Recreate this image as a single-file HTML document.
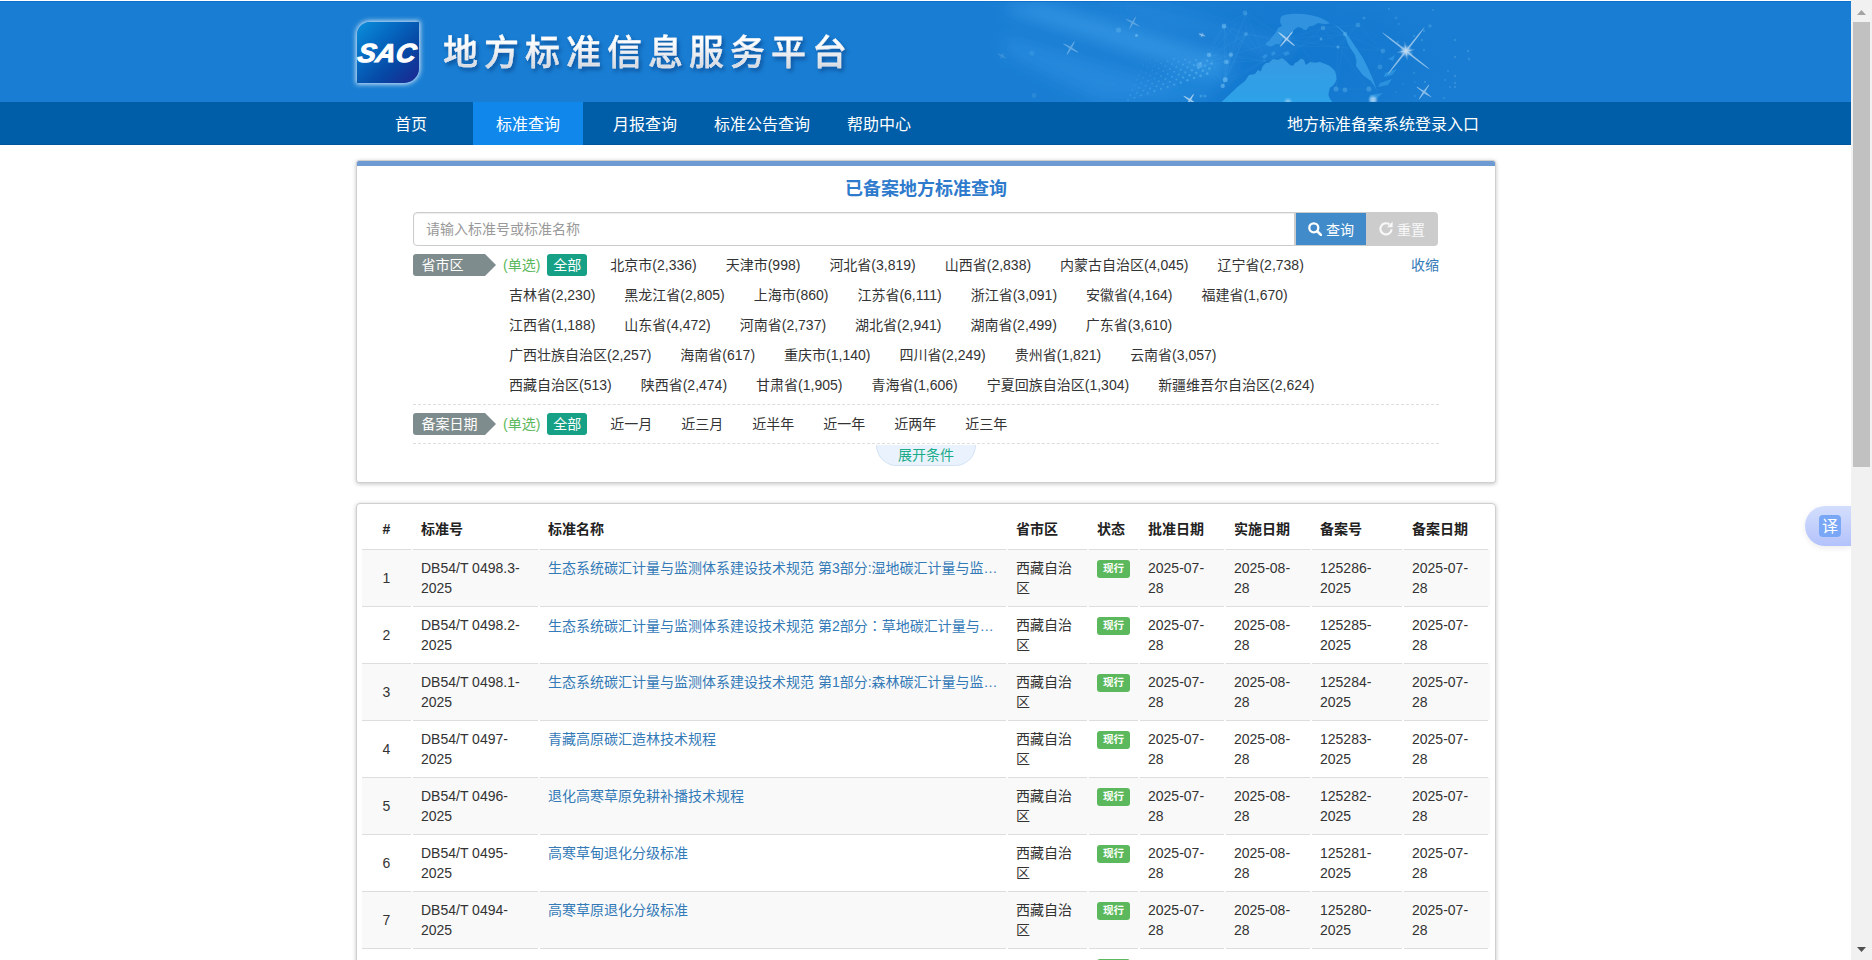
<!DOCTYPE html>
<html lang="zh-CN">
<head>
<meta charset="utf-8">
<title>地方标准信息服务平台</title>
<style>
*{box-sizing:border-box}
html,body{margin:0;padding:0}
body{width:1872px;height:960px;overflow:hidden;position:relative;background:#fff;
 font-family:"Liberation Sans","Noto Sans CJK SC",sans-serif;font-size:14px;line-height:20px;color:#333}
a{color:#337ab7;text-decoration:none}
#page{position:absolute;left:0;top:0;width:1851px;height:960px;overflow:hidden}
/* header */
#top{position:absolute;left:0;top:1px;width:1851px;height:101px;background:#197ed3;overflow:hidden;border-top:1px solid #0f70cb}
#deco{position:absolute;left:940px;top:-1px}
#logo{position:absolute;left:357px;top:20px;width:62px;height:61px;border-radius:13px 0 15px 0;
 background:linear-gradient(135deg,#0b8fdb 0%,#0568c0 35%,#0648a4 65%,#1d2590 100%);box-shadow:0 0 5px 1px rgba(255,255,255,.85)}
#logo svg{position:absolute;left:0;top:0;overflow:visible}
#title{position:absolute;left:443px;top:29px;font-size:35px;line-height:44px;font-weight:500;letter-spacing:6px;-webkit-text-stroke:0.3px #eef0f4;filter:drop-shadow(2px 3px 2px rgba(0,30,90,.45));white-space:nowrap;
 color:#f1f3f6;text-shadow:1px 2px 3px rgba(0,40,100,.55)}
#title span{background:linear-gradient(#fff 20%,#d6dbe2 85%);-webkit-background-clip:text;background-clip:text;color:transparent;text-shadow:none}
/* nav */
#nav{position:absolute;left:0;top:102px;width:1851px;height:43px;background:#005ea8;border-bottom:1px solid #00569e}
#nav a{position:absolute;top:0;height:43px;line-height:45px;width:110px;text-align:center;color:#fff;font-size:16px}
#nav a.on{background:#1088eb}
#nav a.r{width:auto;left:1287px}
/* panels */
.panel{position:absolute;left:356px;width:1140px;background:#fff;border:1px solid #cfcfcf;border-radius:4px;box-shadow:0 1px 4px rgba(0,0,0,.24)}
#search{top:160px;height:323px;border-radius:3px}
#search .strip{position:absolute;left:0;top:0;width:1138px;height:5px;background:#6e9ad3;border-radius:2px 2px 0 0}
#search h3{position:absolute;left:0;top:16px;width:1138px;margin:0;text-align:center;font-size:18px;line-height:24px;font-weight:bold;color:#2e7acc}
#q{position:absolute;left:56px;top:51px;width:882px;height:34px;border:1px solid #ccc;border-radius:4px 0 0 4px;padding:6px 12px;color:#999;font-size:14px;line-height:20px;box-shadow:inset 0 1px 1px rgba(0,0,0,.075)}
.btn{position:absolute;top:51px;height:34px;line-height:34px;font-size:14px;color:#fff;text-align:center;white-space:nowrap}
#bq{left:938px;width:72px;background:#428bca;border:1px solid #ccc;line-height:34px}
#br{left:1009px;width:72px;background:#ccc;color:#f8f8f8;line-height:36px;border-radius:0 4px 4px 0}
.btn svg{vertical-align:-1px;margin-right:4px}
.sec{position:absolute;left:56px;width:1026px;border-bottom:1px dashed #ddd}
.tag{position:absolute;left:0;top:8px;height:22px;width:72px;background:#7f8c8d;color:#fff;border-radius:3px 0 0 3px;padding-left:8.5px;line-height:22px}
.tag:after{content:"";position:absolute;left:72px;top:0;border:11px solid transparent;border-left-color:#7f8c8d;border-right-width:0}
.rows{position:absolute;left:90px;top:8px}
.row{height:30px;white-space:nowrap;line-height:22px}
.row span{display:inline-block;height:22px;padding:0 6px;margin-right:17px;vertical-align:top}
.row span.s{padding:0;margin-right:7px;color:#5cb85c}
.row span.all{background:#16a085;color:#fff;border-radius:3px}
.fold{position:absolute;right:0;top:8px;line-height:22px;color:#337ab7}
#more{position:absolute;left:519px;top:284px;width:100px;height:20.5px;background:#eaf3fd;border:1px solid #d3e2f5;border-top:0;border-radius:0 0 21px 21px;text-align:center;line-height:20px;color:#1aab8a}
/* table */
#list{top:503px;height:600px}
table{position:absolute;left:3px;top:7px;width:1130px;border-collapse:separate;border-spacing:2px 0;table-layout:fixed;background:repeating-linear-gradient(to bottom,#f9f9f9 0,#f9f9f9 57px,transparent 57px,transparent 114px) no-repeat 2px 38px/1128px 100%}
th,td{padding:8px;text-align:left;vertical-align:top;line-height:20px;font-size:14px}
th{font-weight:bold;height:38px;color:#222}
td{border-top:1px solid #ddd;height:57px}

td.c,th.c{text-align:center}
td.c{vertical-align:middle}
td.n{white-space:nowrap;overflow:hidden;text-overflow:ellipsis}
.lab{display:inline-block;white-space:nowrap;background:#5cb85c;color:#fff;font-weight:bold;font-size:10.5px;line-height:11px;padding:3px 6px 4px;border-radius:3px;vertical-align:top;margin-top:2px}
/* scrollbar */
#sb{position:absolute;left:1851px;top:0;width:21px;height:960px;background:#f1f1f1}
#sb i{position:absolute;left:2px;top:22px;width:17px;height:445px;background:#c1c1c1}
#sb b{position:absolute;left:6px;width:9px;height:5px}
#sb b.u{top:10px;background:#a3a3a3;clip-path:polygon(50% 0,100% 100%,0 100%)}
#sb b.d{top:947px;background:#505050;clip-path:polygon(0 0,100% 0,50% 100%)}
/* translate */
#tr{position:absolute;left:1805px;top:506px;width:46px;height:40px;border-radius:20px 0 0 20px;background:linear-gradient(#d3defd,#b3c2fb);box-shadow:0 2px 6px rgba(0,0,0,.08)}
#tr span{position:absolute;left:14px;top:9px;width:22px;height:22px;border-radius:4px;background:#7aa7f5;color:#fff;font-size:16px;line-height:24px;text-align:center}
</style>
</head>
<body>
<div id="page">
<div id="top">
<svg id="deco" width="620" height="101" viewBox="940 0 620 101">
<defs><filter id="b1" x="-100%" y="-100%" width="300%" height="300%"><feGaussianBlur stdDeviation="1.3"/></filter>
<filter id="b8" x="-50%" y="-50%" width="200%" height="200%"><feGaussianBlur stdDeviation="8"/></filter>
<filter id="b05"><feGaussianBlur stdDeviation=".45"/></filter>
<radialGradient id="gl" cx="50%" cy="50%" r="50%"><stop offset="0" stop-color="#0d72cb" stop-opacity=".6"/><stop offset=".65" stop-color="#1075cd" stop-opacity=".4"/><stop offset="1" stop-color="#197ed3" stop-opacity="0"/></radialGradient>
<linearGradient id="lg" x1="0" y1="0" x2="0" y2="1"><stop offset="0" stop-color="#3a9de4"/><stop offset="1" stop-color="#2fa5ea"/></linearGradient>
<linearGradient id="fade" x1="0" y1="0" x2="1" y2="0"><stop offset="0" stop-color="#197ed3"/><stop offset="1" stop-color="#197ed3" stop-opacity="0"/></linearGradient></defs>
<ellipse cx="1300" cy="62" rx="170" ry="88" fill="url(#gl)"/>
<g filter="url(#b8)"><path d="M995 6L1040 2L1235 56L1212 78z" fill="#46a2ec" opacity=".55"/><path d="M990 44L1010 36L1180 84L1140 101L1100 101z" fill="#3a99e8" opacity=".4"/><path d="M1090 0L1130 0L1300 44L1280 58z" fill="#3a99e8" opacity=".3"/><path d="M1170 70L1215 55L1240 70L1200 101L1150 101z" fill="#2f95e6" opacity=".35"/></g>
<rect x="985" y="0" width="30" height="101" fill="url(#fade)"/>
<path d="M1224 25L1246 12" stroke="#9ad6fb" stroke-width=".5" opacity=".09"/><path d="M1224 25L1246 33" stroke="#9ad6fb" stroke-width=".5" opacity=".09"/><path d="M1224 25L1209 54" stroke="#9ad6fb" stroke-width=".5" opacity=".09"/><path d="M1224 25L1231 54" stroke="#9ad6fb" stroke-width=".5" opacity=".09"/><path d="M1224 25L1199 64" stroke="#9ad6fb" stroke-width=".5" opacity=".09"/><path d="M1224 25L1227 61" stroke="#9ad6fb" stroke-width=".5" opacity=".09"/><path d="M1224 25L1225 79" stroke="#9ad6fb" stroke-width=".5" opacity=".09"/><path d="M1224 25L1265 60" stroke="#9ad6fb" stroke-width=".5" opacity=".09"/><path d="M1246 12L1246 33" stroke="#9ad6fb" stroke-width=".5" opacity=".09"/><path d="M1246 12L1209 54" stroke="#9ad6fb" stroke-width=".5" opacity=".09"/><path d="M1246 12L1231 54" stroke="#9ad6fb" stroke-width=".5" opacity=".09"/><path d="M1246 12L1227 61" stroke="#9ad6fb" stroke-width=".5" opacity=".09"/><path d="M1246 12L1286 38" stroke="#9ad6fb" stroke-width=".5" opacity=".09"/><path d="M1246 12L1265 60" stroke="#9ad6fb" stroke-width=".5" opacity=".09"/><path d="M1246 33L1209 54" stroke="#9ad6fb" stroke-width=".5" opacity=".09"/><path d="M1246 33L1231 54" stroke="#9ad6fb" stroke-width=".5" opacity=".09"/><path d="M1246 33L1199 64" stroke="#9ad6fb" stroke-width=".5" opacity=".09"/><path d="M1246 33L1227 61" stroke="#9ad6fb" stroke-width=".5" opacity=".09"/><path d="M1246 33L1225 79" stroke="#9ad6fb" stroke-width=".5" opacity=".09"/><path d="M1246 33L1223 85" stroke="#9ad6fb" stroke-width=".5" opacity=".09"/><path d="M1246 33L1286 38" stroke="#9ad6fb" stroke-width=".5" opacity=".09"/><path d="M1246 33L1265 60" stroke="#9ad6fb" stroke-width=".5" opacity=".09"/><path d="M1246 33L1300 45" stroke="#9ad6fb" stroke-width=".5" opacity=".09"/><path d="M1209 54L1231 54" stroke="#9ad6fb" stroke-width=".5" opacity=".09"/><path d="M1209 54L1199 64" stroke="#9ad6fb" stroke-width=".5" opacity=".09"/><path d="M1209 54L1227 61" stroke="#9ad6fb" stroke-width=".5" opacity=".09"/><path d="M1209 54L1225 79" stroke="#9ad6fb" stroke-width=".5" opacity=".09"/><path d="M1209 54L1223 85" stroke="#9ad6fb" stroke-width=".5" opacity=".09"/><path d="M1209 54L1265 60" stroke="#9ad6fb" stroke-width=".5" opacity=".09"/><path d="M1231 54L1199 64" stroke="#9ad6fb" stroke-width=".5" opacity=".09"/><path d="M1231 54L1227 61" stroke="#9ad6fb" stroke-width=".5" opacity=".09"/><path d="M1231 54L1225 79" stroke="#9ad6fb" stroke-width=".5" opacity=".09"/><path d="M1231 54L1223 85" stroke="#9ad6fb" stroke-width=".5" opacity=".09"/><path d="M1231 54L1286 38" stroke="#9ad6fb" stroke-width=".5" opacity=".09"/><path d="M1231 54L1265 60" stroke="#9ad6fb" stroke-width=".5" opacity=".09"/><path d="M1199 64L1227 61" stroke="#9ad6fb" stroke-width=".5" opacity=".09"/><path d="M1199 64L1225 79" stroke="#9ad6fb" stroke-width=".5" opacity=".09"/><path d="M1199 64L1223 85" stroke="#9ad6fb" stroke-width=".5" opacity=".09"/><path d="M1227 61L1225 79" stroke="#9ad6fb" stroke-width=".5" opacity=".09"/><path d="M1227 61L1223 85" stroke="#9ad6fb" stroke-width=".5" opacity=".09"/><path d="M1227 61L1265 60" stroke="#9ad6fb" stroke-width=".5" opacity=".09"/><path d="M1225 79L1223 85" stroke="#9ad6fb" stroke-width=".5" opacity=".09"/><path d="M1225 79L1265 60" stroke="#9ad6fb" stroke-width=".5" opacity=".09"/><path d="M1223 85L1265 60" stroke="#9ad6fb" stroke-width=".5" opacity=".09"/><path d="M1286 38L1323 27" stroke="#9ad6fb" stroke-width=".5" opacity=".09"/><path d="M1286 38L1345 33" stroke="#9ad6fb" stroke-width=".5" opacity=".09"/><path d="M1286 38L1338 46" stroke="#9ad6fb" stroke-width=".5" opacity=".09"/><path d="M1286 38L1265 60" stroke="#9ad6fb" stroke-width=".5" opacity=".09"/><path d="M1286 38L1300 45" stroke="#9ad6fb" stroke-width=".5" opacity=".09"/><path d="M1323 27L1345 33" stroke="#9ad6fb" stroke-width=".5" opacity=".09"/><path d="M1323 27L1338 46" stroke="#9ad6fb" stroke-width=".5" opacity=".09"/><path d="M1323 27L1358 24" stroke="#9ad6fb" stroke-width=".5" opacity=".09"/><path d="M1323 27L1300 45" stroke="#9ad6fb" stroke-width=".5" opacity=".09"/><path d="M1345 33L1338 46" stroke="#9ad6fb" stroke-width=".5" opacity=".09"/><path d="M1345 33L1358 24" stroke="#9ad6fb" stroke-width=".5" opacity=".09"/><path d="M1345 33L1383 50" stroke="#9ad6fb" stroke-width=".5" opacity=".09"/><path d="M1345 33L1336 88" stroke="#9ad6fb" stroke-width=".5" opacity=".09"/><path d="M1345 33L1300 45" stroke="#9ad6fb" stroke-width=".5" opacity=".09"/><path d="M1338 46L1358 24" stroke="#9ad6fb" stroke-width=".5" opacity=".09"/><path d="M1338 46L1383 50" stroke="#9ad6fb" stroke-width=".5" opacity=".09"/><path d="M1338 46L1336 88" stroke="#9ad6fb" stroke-width=".5" opacity=".09"/><path d="M1338 46L1369 88" stroke="#9ad6fb" stroke-width=".5" opacity=".09"/><path d="M1338 46L1300 45" stroke="#9ad6fb" stroke-width=".5" opacity=".09"/><path d="M1358 24L1383 50" stroke="#9ad6fb" stroke-width=".5" opacity=".09"/><path d="M1383 50L1369 88" stroke="#9ad6fb" stroke-width=".5" opacity=".09"/><path d="M1336 88L1369 88" stroke="#9ad6fb" stroke-width=".5" opacity=".09"/><path d="M1336 88L1300 45" stroke="#9ad6fb" stroke-width=".5" opacity=".09"/><path d="M1265 60L1300 45" stroke="#9ad6fb" stroke-width=".5" opacity=".09"/>
<g filter="url(#b05)"><path d="M1220.6 102L1229 94L1238 85.6L1245 80L1249 74L1255 73L1258 69L1260.7 70.4L1262.8 65L1266 62L1269 61.8L1273 58L1278 59L1282 57L1286.7 60.7L1290 64L1293 65L1295 62L1297.5 60.7L1301 57.5L1304 59L1305 62L1306 64L1310 61L1314.8 61.8L1320 61L1324.6 62.8L1329 64.5L1332 67L1335 70L1336 73.7L1336.5 78L1335.4 81.3L1333 84.5L1330 86.7L1329 90L1328.4 94.3L1330 98L1333 102z" fill="url(#lg)" opacity=".93"/><path d="M1265.5 43.3L1267 41L1269 40L1272 36L1275.8 31.4L1278 27L1282 25L1280 21L1280.7 16.3L1283 14.5L1286.7 13.5L1294 12.8L1303 13L1311 14.2L1319 16.3L1325 19L1330 22.2L1326 23L1322.4 22.8L1318 22L1313.8 24.4L1309 25.5L1306 29.3L1303.5 28.5L1301.8 27L1298 26L1295 28L1293 30L1292 33.6L1289 33L1286.7 34.7L1283 38L1280 43.3L1276 43L1271.5 45.5L1268 45z" fill="#3698e2" opacity=".85"/><path d="M1334 23.3L1339 26.5L1344 30.3L1349 36L1353.8 43.3L1358 49.5L1362.5 56.3L1366.5 64L1370 71.5L1373 78.5L1375.5 85.6L1377.5 92L1378.8 97.5L1379.5 102L1377.7 92L1375 86L1371 80L1366 76.5L1362.5 73.7L1359 69L1356 65L1356.5 60L1355 54L1351 48L1348 43L1346 37.5L1344 32.5L1339 27.5z" fill="#379de6" opacity=".85"/>
<path d="M1262 56L1265 53L1268 54L1265 58z M1271 52L1274 50L1276 53L1272 55z M1283 52L1288 50L1290 53L1285 55z" fill="#3698e2" opacity=".7"/>
<path d="M1385 72L1397 68L1392 74L1384 76z M1380 82L1392 78L1388 84L1378 86z M1370 94L1383 92L1376 98L1369 98z M1388 58L1395 54L1393 60z" fill="#3ba4ea" opacity=".55"/></g>
<circle cx="1118.5" cy="29" r="2.6" fill="#7fcaf8" opacity="0.28"/><circle cx="1136.5" cy="34.4" r="1.6" fill="#7fcaf8" opacity="0.5"/><circle cx="1031.8" cy="52" r="2.6" fill="#7fcaf8" opacity="0.16"/><circle cx="1034" cy="94.5" r="2.4" fill="#7fcaf8" opacity="0.15"/><circle cx="1224" cy="25.4" r="2.4" fill="#7fcaf8" opacity="0.3"/><circle cx="1209" cy="53.8" r="2.4" fill="#7fcaf8" opacity="0.32"/><circle cx="1230.7" cy="53.5" r="2.2" fill="#7fcaf8" opacity="0.3"/><circle cx="1199.3" cy="64.3" r="3" fill="#7fcaf8" opacity="0.32"/><circle cx="1226" cy="61" r="2.4" fill="#7fcaf8" opacity="0.3"/><circle cx="1225.5" cy="78.5" r="2.6" fill="#7fcaf8" opacity="0.32"/><circle cx="1222.5" cy="85" r="2.2" fill="#7fcaf8" opacity="0.3"/><circle cx="1245" cy="12" r="2.4" fill="#7fcaf8" opacity="0.25"/><circle cx="1224" cy="25" r="2.4" fill="#7fcaf8" opacity="0.28"/><circle cx="1246" cy="33" r="2" fill="#7fcaf8" opacity="0.28"/><circle cx="1209" cy="54" r="2" fill="#7fcaf8" opacity="0.3"/><circle cx="1231" cy="54" r="2" fill="#7fcaf8" opacity="0.3"/><circle cx="1227" cy="61" r="2" fill="#7fcaf8" opacity="0.3"/><circle cx="1225" cy="79" r="2.4" fill="#7fcaf8" opacity="0.3"/><circle cx="1223" cy="85" r="2" fill="#7fcaf8" opacity="0.28"/><circle cx="1201" cy="95" r="1.6" fill="#7fcaf8" opacity="0.3"/><circle cx="1205" cy="95" r="1.6" fill="#7fcaf8" opacity="0.3"/><circle cx="1323" cy="27" r="2.2" fill="#7fcaf8" opacity="0.3"/><circle cx="1345" cy="33" r="2.2" fill="#7fcaf8" opacity="0.3"/><circle cx="1321" cy="38" r="1.4" fill="#7fcaf8" opacity="0.4"/><circle cx="1338" cy="46" r="1.6" fill="#7fcaf8" opacity="0.4"/><circle cx="1358" cy="24" r="2.4" fill="#7fcaf8" opacity="0.25"/><circle cx="1383" cy="50" r="2.4" fill="#7fcaf8" opacity="0.25"/><circle cx="1380" cy="66" r="2.4" fill="#7fcaf8" opacity="0.25"/><circle cx="1336" cy="88" r="2.6" fill="#7fcaf8" opacity="0.3"/><circle cx="1345" cy="89" r="2.4" fill="#7fcaf8" opacity="0.3"/><circle cx="1369" cy="88" r="2.6" fill="#7fcaf8" opacity="0.3"/><circle cx="1364" cy="17" r="1.6" fill="#7fcaf8" opacity="0.25"/><circle cx="1396" cy="17" r="1.4" fill="#7fcaf8" opacity="0.2"/><circle cx="1389" cy="8" r="1.2" fill="#7fcaf8" opacity="0.2"/><circle cx="1430" cy="25" r="1.8" fill="#7fcaf8" opacity="0.25"/><circle cx="1128.0" cy="99.0" r="0.92" fill="#6cc4f7" opacity="0.27"/><circle cx="1130.2" cy="94.0" r="0.88" fill="#6cc4f7" opacity="0.26"/><circle cx="1132.4" cy="89.0" r="0.84" fill="#6cc4f7" opacity="0.24"/><circle cx="1134.6" cy="84.0" r="0.80" fill="#6cc4f7" opacity="0.22"/><circle cx="1136.8" cy="79.0" r="0.76" fill="#6cc4f7" opacity="0.21"/><circle cx="1139.0" cy="74.0" r="0.72" fill="#6cc4f7" opacity="0.20"/><circle cx="1141.2" cy="69.0" r="0.68" fill="#6cc4f7" opacity="0.18"/><circle cx="1143.4" cy="64.0" r="0.64" fill="#6cc4f7" opacity="0.16"/><circle cx="1145.6" cy="59.0" r="0.60" fill="#6cc4f7" opacity="0.15"/><circle cx="1134.6" cy="96.8" r="0.96" fill="#6cc4f7" opacity="0.29"/><circle cx="1136.8" cy="91.8" r="0.92" fill="#6cc4f7" opacity="0.27"/><circle cx="1139.0" cy="86.8" r="0.88" fill="#6cc4f7" opacity="0.26"/><circle cx="1141.2" cy="81.8" r="0.84" fill="#6cc4f7" opacity="0.24"/><circle cx="1143.4" cy="76.8" r="0.80" fill="#6cc4f7" opacity="0.22"/><circle cx="1145.6" cy="71.8" r="0.76" fill="#6cc4f7" opacity="0.21"/><circle cx="1147.8" cy="66.8" r="0.72" fill="#6cc4f7" opacity="0.20"/><circle cx="1150.0" cy="61.8" r="0.68" fill="#6cc4f7" opacity="0.18"/><circle cx="1141.2" cy="94.6" r="1.00" fill="#6cc4f7" opacity="0.30"/><circle cx="1143.4" cy="89.6" r="0.96" fill="#6cc4f7" opacity="0.29"/><circle cx="1145.6" cy="84.6" r="0.92" fill="#6cc4f7" opacity="0.27"/><circle cx="1147.8" cy="79.6" r="0.88" fill="#6cc4f7" opacity="0.26"/><circle cx="1150.0" cy="74.6" r="0.84" fill="#6cc4f7" opacity="0.24"/><circle cx="1152.2" cy="69.6" r="0.80" fill="#6cc4f7" opacity="0.22"/><circle cx="1154.4" cy="64.6" r="0.76" fill="#6cc4f7" opacity="0.21"/><circle cx="1156.6" cy="59.6" r="0.72" fill="#6cc4f7" opacity="0.20"/><circle cx="1147.8" cy="92.4" r="1.04" fill="#6cc4f7" opacity="0.32"/><circle cx="1150.0" cy="87.4" r="1.00" fill="#6cc4f7" opacity="0.30"/><circle cx="1152.2" cy="82.4" r="0.96" fill="#6cc4f7" opacity="0.29"/><circle cx="1154.4" cy="77.4" r="0.92" fill="#6cc4f7" opacity="0.27"/><circle cx="1156.6" cy="72.4" r="0.88" fill="#6cc4f7" opacity="0.26"/><circle cx="1158.8" cy="67.4" r="0.84" fill="#6cc4f7" opacity="0.24"/><circle cx="1161.0" cy="62.4" r="0.80" fill="#6cc4f7" opacity="0.22"/><circle cx="1154.4" cy="90.2" r="1.08" fill="#6cc4f7" opacity="0.33"/><circle cx="1156.6" cy="85.2" r="1.04" fill="#6cc4f7" opacity="0.32"/><circle cx="1158.8" cy="80.2" r="1.00" fill="#6cc4f7" opacity="0.30"/><circle cx="1161.0" cy="75.2" r="0.96" fill="#6cc4f7" opacity="0.28"/><circle cx="1163.2" cy="70.2" r="0.92" fill="#6cc4f7" opacity="0.27"/><circle cx="1165.4" cy="65.2" r="0.88" fill="#6cc4f7" opacity="0.26"/><circle cx="1167.6" cy="60.2" r="0.84" fill="#6cc4f7" opacity="0.24"/><circle cx="1161.0" cy="88.0" r="1.12" fill="#6cc4f7" opacity="0.34"/><circle cx="1163.2" cy="83.0" r="1.08" fill="#6cc4f7" opacity="0.33"/><circle cx="1165.4" cy="78.0" r="1.04" fill="#6cc4f7" opacity="0.32"/><circle cx="1167.6" cy="73.0" r="1.00" fill="#6cc4f7" opacity="0.30"/><circle cx="1169.8" cy="68.0" r="0.96" fill="#6cc4f7" opacity="0.29"/><circle cx="1172.0" cy="63.0" r="0.92" fill="#6cc4f7" opacity="0.27"/><circle cx="1174.2" cy="58.0" r="0.88" fill="#6cc4f7" opacity="0.26"/><circle cx="1167.6" cy="85.8" r="1.16" fill="#6cc4f7" opacity="0.36"/><circle cx="1169.8" cy="80.8" r="1.12" fill="#6cc4f7" opacity="0.34"/><circle cx="1172.0" cy="75.8" r="1.08" fill="#6cc4f7" opacity="0.33"/><circle cx="1174.2" cy="70.8" r="1.04" fill="#6cc4f7" opacity="0.32"/><circle cx="1176.4" cy="65.8" r="1.00" fill="#6cc4f7" opacity="0.30"/><circle cx="1178.6" cy="60.8" r="0.96" fill="#6cc4f7" opacity="0.29"/><circle cx="1174.2" cy="83.6" r="1.20" fill="#6cc4f7" opacity="0.38"/><circle cx="1176.4" cy="78.6" r="1.16" fill="#6cc4f7" opacity="0.36"/><circle cx="1178.6" cy="73.6" r="1.12" fill="#6cc4f7" opacity="0.35"/><circle cx="1180.8" cy="68.6" r="1.08" fill="#6cc4f7" opacity="0.33"/><circle cx="1183.0" cy="63.6" r="1.04" fill="#6cc4f7" opacity="0.32"/><circle cx="1185.2" cy="58.6" r="1.00" fill="#6cc4f7" opacity="0.30"/><circle cx="1180.8" cy="81.4" r="1.24" fill="#6cc4f7" opacity="0.39"/><circle cx="1183.0" cy="76.4" r="1.20" fill="#6cc4f7" opacity="0.38"/><circle cx="1185.2" cy="71.4" r="1.16" fill="#6cc4f7" opacity="0.36"/><circle cx="1187.4" cy="66.4" r="1.12" fill="#6cc4f7" opacity="0.34"/><circle cx="1189.6" cy="61.4" r="1.08" fill="#6cc4f7" opacity="0.33"/><circle cx="1187.4" cy="79.2" r="1.28" fill="#6cc4f7" opacity="0.41"/><circle cx="1189.6" cy="74.2" r="1.24" fill="#6cc4f7" opacity="0.39"/><circle cx="1191.8" cy="69.2" r="1.20" fill="#6cc4f7" opacity="0.38"/><circle cx="1194.0" cy="64.2" r="1.16" fill="#6cc4f7" opacity="0.36"/><circle cx="1196.2" cy="59.2" r="1.12" fill="#6cc4f7" opacity="0.34"/><circle cx="1194.0" cy="77.0" r="1.32" fill="#6cc4f7" opacity="0.42"/><circle cx="1196.2" cy="72.0" r="1.28" fill="#6cc4f7" opacity="0.41"/><circle cx="1198.4" cy="67.0" r="1.24" fill="#6cc4f7" opacity="0.39"/><circle cx="1200.6" cy="62.0" r="1.20" fill="#6cc4f7" opacity="0.38"/><circle cx="1200.6" cy="74.8" r="1.36" fill="#6cc4f7" opacity="0.43"/><circle cx="1202.8" cy="69.8" r="1.32" fill="#6cc4f7" opacity="0.42"/><circle cx="1205.0" cy="64.8" r="1.28" fill="#6cc4f7" opacity="0.41"/><circle cx="1207.2" cy="59.8" r="1.24" fill="#6cc4f7" opacity="0.39"/><circle cx="1207.2" cy="72.6" r="1.40" fill="#6cc4f7" opacity="0.45"/><circle cx="1209.4" cy="67.6" r="1.36" fill="#6cc4f7" opacity="0.43"/><circle cx="1211.6" cy="62.6" r="1.32" fill="#6cc4f7" opacity="0.42"/><circle cx="1425" cy="81" r="1.2" fill="#9ad6fb" opacity=".2"/><circle cx="1411" cy="53" r="1.2" fill="#9ad6fb" opacity=".2"/><circle cx="1455" cy="86" r="1.2" fill="#9ad6fb" opacity=".2"/><circle cx="1403" cy="83" r="0.8" fill="#9ad6fb" opacity=".2"/><circle cx="1455" cy="39" r="1.2" fill="#9ad6fb" opacity=".2"/><circle cx="1424" cy="30" r="1.2" fill="#9ad6fb" opacity=".2"/><circle cx="1455" cy="75" r="1.2" fill="#9ad6fb" opacity=".2"/><circle cx="1455" cy="56" r="1.2" fill="#9ad6fb" opacity=".2"/><circle cx="1414" cy="35" r="1.2" fill="#9ad6fb" opacity=".2"/><circle cx="1414" cy="72" r="1" fill="#9ad6fb" opacity=".2"/><circle cx="1396" cy="91" r="0.8" fill="#9ad6fb" opacity=".2"/><circle cx="1415" cy="81" r="0.8" fill="#9ad6fb" opacity=".2"/><circle cx="1433" cy="9" r="1" fill="#9ad6fb" opacity=".2"/><circle cx="1455" cy="82" r="1.2" fill="#9ad6fb" opacity=".2"/><circle cx="1444" cy="97" r="1" fill="#9ad6fb" opacity=".2"/><circle cx="1445" cy="79" r="1" fill="#9ad6fb" opacity=".2"/><circle cx="1412" cy="52" r="0.8" fill="#9ad6fb" opacity=".2"/><circle cx="1399" cy="23" r="1" fill="#9ad6fb" opacity=".2"/><circle cx="1422" cy="39" r="1.2" fill="#9ad6fb" opacity=".2"/><circle cx="1450" cy="86" r="1" fill="#9ad6fb" opacity=".2"/><circle cx="1448" cy="70" r="1" fill="#9ad6fb" opacity=".2"/><circle cx="1468" cy="50" r="1.2" fill="#9ad6fb" opacity=".2"/><circle cx="1469" cy="58" r="1.2" fill="#9ad6fb" opacity=".2"/><circle cx="1424" cy="49" r="1.2" fill="#9ad6fb" opacity=".2"/><circle cx="1398" cy="41" r="1.2" fill="#9ad6fb" opacity=".2"/><circle cx="1415" cy="95" r="1" fill="#9ad6fb" opacity=".2"/>
<g transform="translate(1406 50) rotate(38)" opacity="0.5"><ellipse rx="30" ry="0.9" fill="#fff"/><ellipse rx="0.9" ry="30.0" fill="#fff"/><circle r="4.8" fill="#fff" opacity=".7" filter="url(#b1)"/></g><g transform="translate(1406 50) rotate(-8)" opacity="0.35"><ellipse rx="9" ry="0.7" fill="#fff"/><ellipse rx="0.7" ry="9.0" fill="#fff"/><circle r="1.4" fill="#fff" opacity=".7" filter="url(#b1)"/></g><g transform="translate(1286.5 38) rotate(40)" opacity="0.62"><ellipse rx="11" ry="0.8" fill="#fff"/><ellipse rx="0.8" ry="10.0" fill="#fff"/><circle r="1.8" fill="#fff" opacity=".7" filter="url(#b1)"/></g><g transform="translate(1070.7 47) rotate(30)" opacity="0.3"><ellipse rx="9" ry="0.8" fill="#fff"/><ellipse rx="0.8" ry="8.0" fill="#fff"/><circle r="1.4" fill="#fff" opacity=".7" filter="url(#b1)"/></g><g transform="translate(1132.7 21.7) rotate(28)" opacity="0.28"><ellipse rx="8" ry="0.7" fill="#fff"/><ellipse rx="0.7" ry="7.0" fill="#fff"/><circle r="1.4" fill="#fff" opacity=".7" filter="url(#b1)"/></g><g transform="translate(1202 34) rotate(20)" opacity="0.5"><ellipse rx="3.5" ry="0.6" fill="#fff"/><ellipse rx="0.6" ry="1.9" fill="#fff"/><circle r="1.4" fill="#fff" opacity=".7" filter="url(#b1)"/></g><g transform="translate(1424 91) rotate(35)" opacity="0.5"><ellipse rx="9" ry="0.8" fill="#fff"/><ellipse rx="0.8" ry="9.0" fill="#fff"/><circle r="1.4" fill="#fff" opacity=".7" filter="url(#b1)"/></g><g transform="translate(1190 99) rotate(32)" opacity="0.6"><ellipse rx="8" ry="0.8" fill="#fff"/><ellipse rx="0.8" ry="7.0" fill="#fff"/><circle r="1.4" fill="#fff" opacity=".7" filter="url(#b1)"/></g><g transform="translate(1002 55) rotate(30)" opacity="0.15"><ellipse rx="5" ry="0.7" fill="#fff"/><ellipse rx="0.7" ry="2.8" fill="#fff"/><circle r="1.4" fill="#fff" opacity=".7" filter="url(#b1)"/></g>
<circle cx="1406" cy="50" r="4" fill="#fff" opacity=".2" filter="url(#b1)"/>
<circle cx="1373" cy="99" r="3.5" fill="#cfecff" opacity=".7" filter="url(#b1)"/><circle cx="1288" cy="101" r="3" fill="#cfecff" opacity=".5" filter="url(#b1)"/>
</svg>
  <div id="logo"><svg width="62" height="61"><text x="28.5" y="40" text-anchor="middle" transform="translate(0 40) skewX(-10) translate(0 -40)" font-family="Liberation Sans, sans-serif" font-weight="bold" font-style="italic" font-size="26" fill="#fff" stroke="#fff" stroke-width="1" textLength="58" lengthAdjust="spacingAndGlyphs">SAC</text></svg></div>
  <div id="title"><span>地方标准信息服务平台</span></div>
</div>
<div id="nav">
  <a style="left:356px">首页</a><a class="on" style="left:473px">标准查询</a><a style="left:590px">月报查询</a><a style="left:707px">标准公告查询</a><a style="left:824px">帮助中心</a>
  <a class="r">地方标准备案系统登录入口</a>
</div>
<div class="panel" id="search">
  <div class="strip"></div>
  <h3>已备案地方标准查询</h3>
  <div id="q">请输入标准号或标准名称</div>
  <div class="btn" id="bq"><svg width="14" height="14" viewBox="0 0 14 14"><circle cx="5.8" cy="5.8" r="4.5" fill="none" stroke="#fff" stroke-width="2.3"/><path d="M9.2 9.2L12.9 12.9" stroke="#fff" stroke-width="2.7" stroke-linecap="round"/></svg>查询</div>
  <div class="btn" id="br"><svg width="14" height="15" viewBox="0 0 14 15"><path d="M12.6 8.2A5.6 5.6 0 1 1 10.4 3.4" fill="none" stroke="#f8f8f8" stroke-width="2.2"/><path d="M13.6 0.6V6.2H8z" fill="#f8f8f8"/></svg>重置</div>
  <div class="sec" style="top:85px;height:159px">
    <div class="tag">省市区</div>
    <div class="rows">
      <div class="row"><span class="s">(单选)</span><span class="all">全部</span><span>北京市(2,336)</span><span>天津市(998)</span><span>河北省(3,819)</span><span>山西省(2,838)</span><span>内蒙古自治区(4,045)</span><span>辽宁省(2,738)</span></div>
      <div class="row"><span>吉林省(2,230)</span><span>黑龙江省(2,805)</span><span>上海市(860)</span><span>江苏省(6,111)</span><span>浙江省(3,091)</span><span>安徽省(4,164)</span><span>福建省(1,670)</span></div>
      <div class="row"><span>江西省(1,188)</span><span>山东省(4,472)</span><span>河南省(2,737)</span><span>湖北省(2,941)</span><span>湖南省(2,499)</span><span>广东省(3,610)</span></div>
      <div class="row"><span>广西壮族自治区(2,257)</span><span>海南省(617)</span><span>重庆市(1,140)</span><span>四川省(2,249)</span><span>贵州省(1,821)</span><span>云南省(3,057)</span></div>
      <div class="row"><span>西藏自治区(513)</span><span>陕西省(2,474)</span><span>甘肃省(1,905)</span><span>青海省(1,606)</span><span>宁夏回族自治区(1,304)</span><span>新疆维吾尔自治区(2,624)</span></div>
    </div>
    <a class="fold">收缩</a>
  </div>
  <div class="sec" style="top:244px;height:39px">
    <div class="tag">备案日期</div>
    <div class="rows">
      <div class="row"><span class="s">(单选)</span><span class="all">全部</span><span>近一月</span><span>近三月</span><span>近半年</span><span>近一年</span><span>近两年</span><span>近三年</span></div>
    </div>
  </div>
  <div id="more">展开条件</div>
</div>
<div class="panel" id="list">
<table>
<colgroup><col style="width:49px"><col style="width:125px"><col style="width:466px"><col style="width:79px"><col style="width:49px"><col style="width:84px"><col style="width:84px"><col style="width:90px"><col style="width:84px"></colgroup>
<thead><tr><th class="c">#</th><th>标准号</th><th>标准名称</th><th>省市区</th><th>状态</th><th>批准日期</th><th>实施日期</th><th>备案号</th><th>备案日期</th></tr></thead>
<tbody>
<tr><td class="c">1</td><td>DB54/T 0498.3-2025</td><td class="n"><a>生态系统碳汇计量与监测体系建设技术规范 第3部分:湿地碳汇计量与监…</a></td><td>西藏自治区</td><td><span class="lab">现行</span></td><td>2025-07-28</td><td>2025-08-28</td><td>125286-2025</td><td>2025-07-28</td></tr>
<tr><td class="c">2</td><td>DB54/T 0498.2-2025</td><td class="n"><a>生态系统碳汇计量与监测体系建设技术规范 第2部分<span lang="zh-TW" style="font-family:'Noto Sans CJK TC',sans-serif">：</span>草地碳汇计量与…</a></td><td>西藏自治区</td><td><span class="lab">现行</span></td><td>2025-07-28</td><td>2025-08-28</td><td>125285-2025</td><td>2025-07-28</td></tr>
<tr><td class="c">3</td><td>DB54/T 0498.1-2025</td><td class="n"><a>生态系统碳汇计量与监测体系建设技术规范 第1部分:森林碳汇计量与监…</a></td><td>西藏自治区</td><td><span class="lab">现行</span></td><td>2025-07-28</td><td>2025-08-28</td><td>125284-2025</td><td>2025-07-28</td></tr>
<tr><td class="c">4</td><td>DB54/T 0497-2025</td><td class="n"><a>青藏高原碳汇造林技术规程</a></td><td>西藏自治区</td><td><span class="lab">现行</span></td><td>2025-07-28</td><td>2025-08-28</td><td>125283-2025</td><td>2025-07-28</td></tr>
<tr><td class="c">5</td><td>DB54/T 0496-2025</td><td class="n"><a>退化高寒草原免耕补播技术规程</a></td><td>西藏自治区</td><td><span class="lab">现行</span></td><td>2025-07-28</td><td>2025-08-28</td><td>125282-2025</td><td>2025-07-28</td></tr>
<tr><td class="c">6</td><td>DB54/T 0495-2025</td><td class="n"><a>高寒草甸退化分级标准</a></td><td>西藏自治区</td><td><span class="lab">现行</span></td><td>2025-07-28</td><td>2025-08-28</td><td>125281-2025</td><td>2025-07-28</td></tr>
<tr><td class="c">7</td><td>DB54/T 0494-2025</td><td class="n"><a>高寒草原退化分级标准</a></td><td>西藏自治区</td><td><span class="lab">现行</span></td><td>2025-07-28</td><td>2025-08-28</td><td>125280-2025</td><td>2025-07-28</td></tr>
<tr><td class="c">8</td><td></td><td class="n"></td><td></td><td><span class="lab">现行</span></td><td></td><td></td><td></td><td></td></tr>
</tbody>
</table>
</div>
<div id="tr"><span>译</span></div>
</div>
<div id="sb"><b class="u"></b><i></i><b class="d"></b></div>
</body>
</html>
